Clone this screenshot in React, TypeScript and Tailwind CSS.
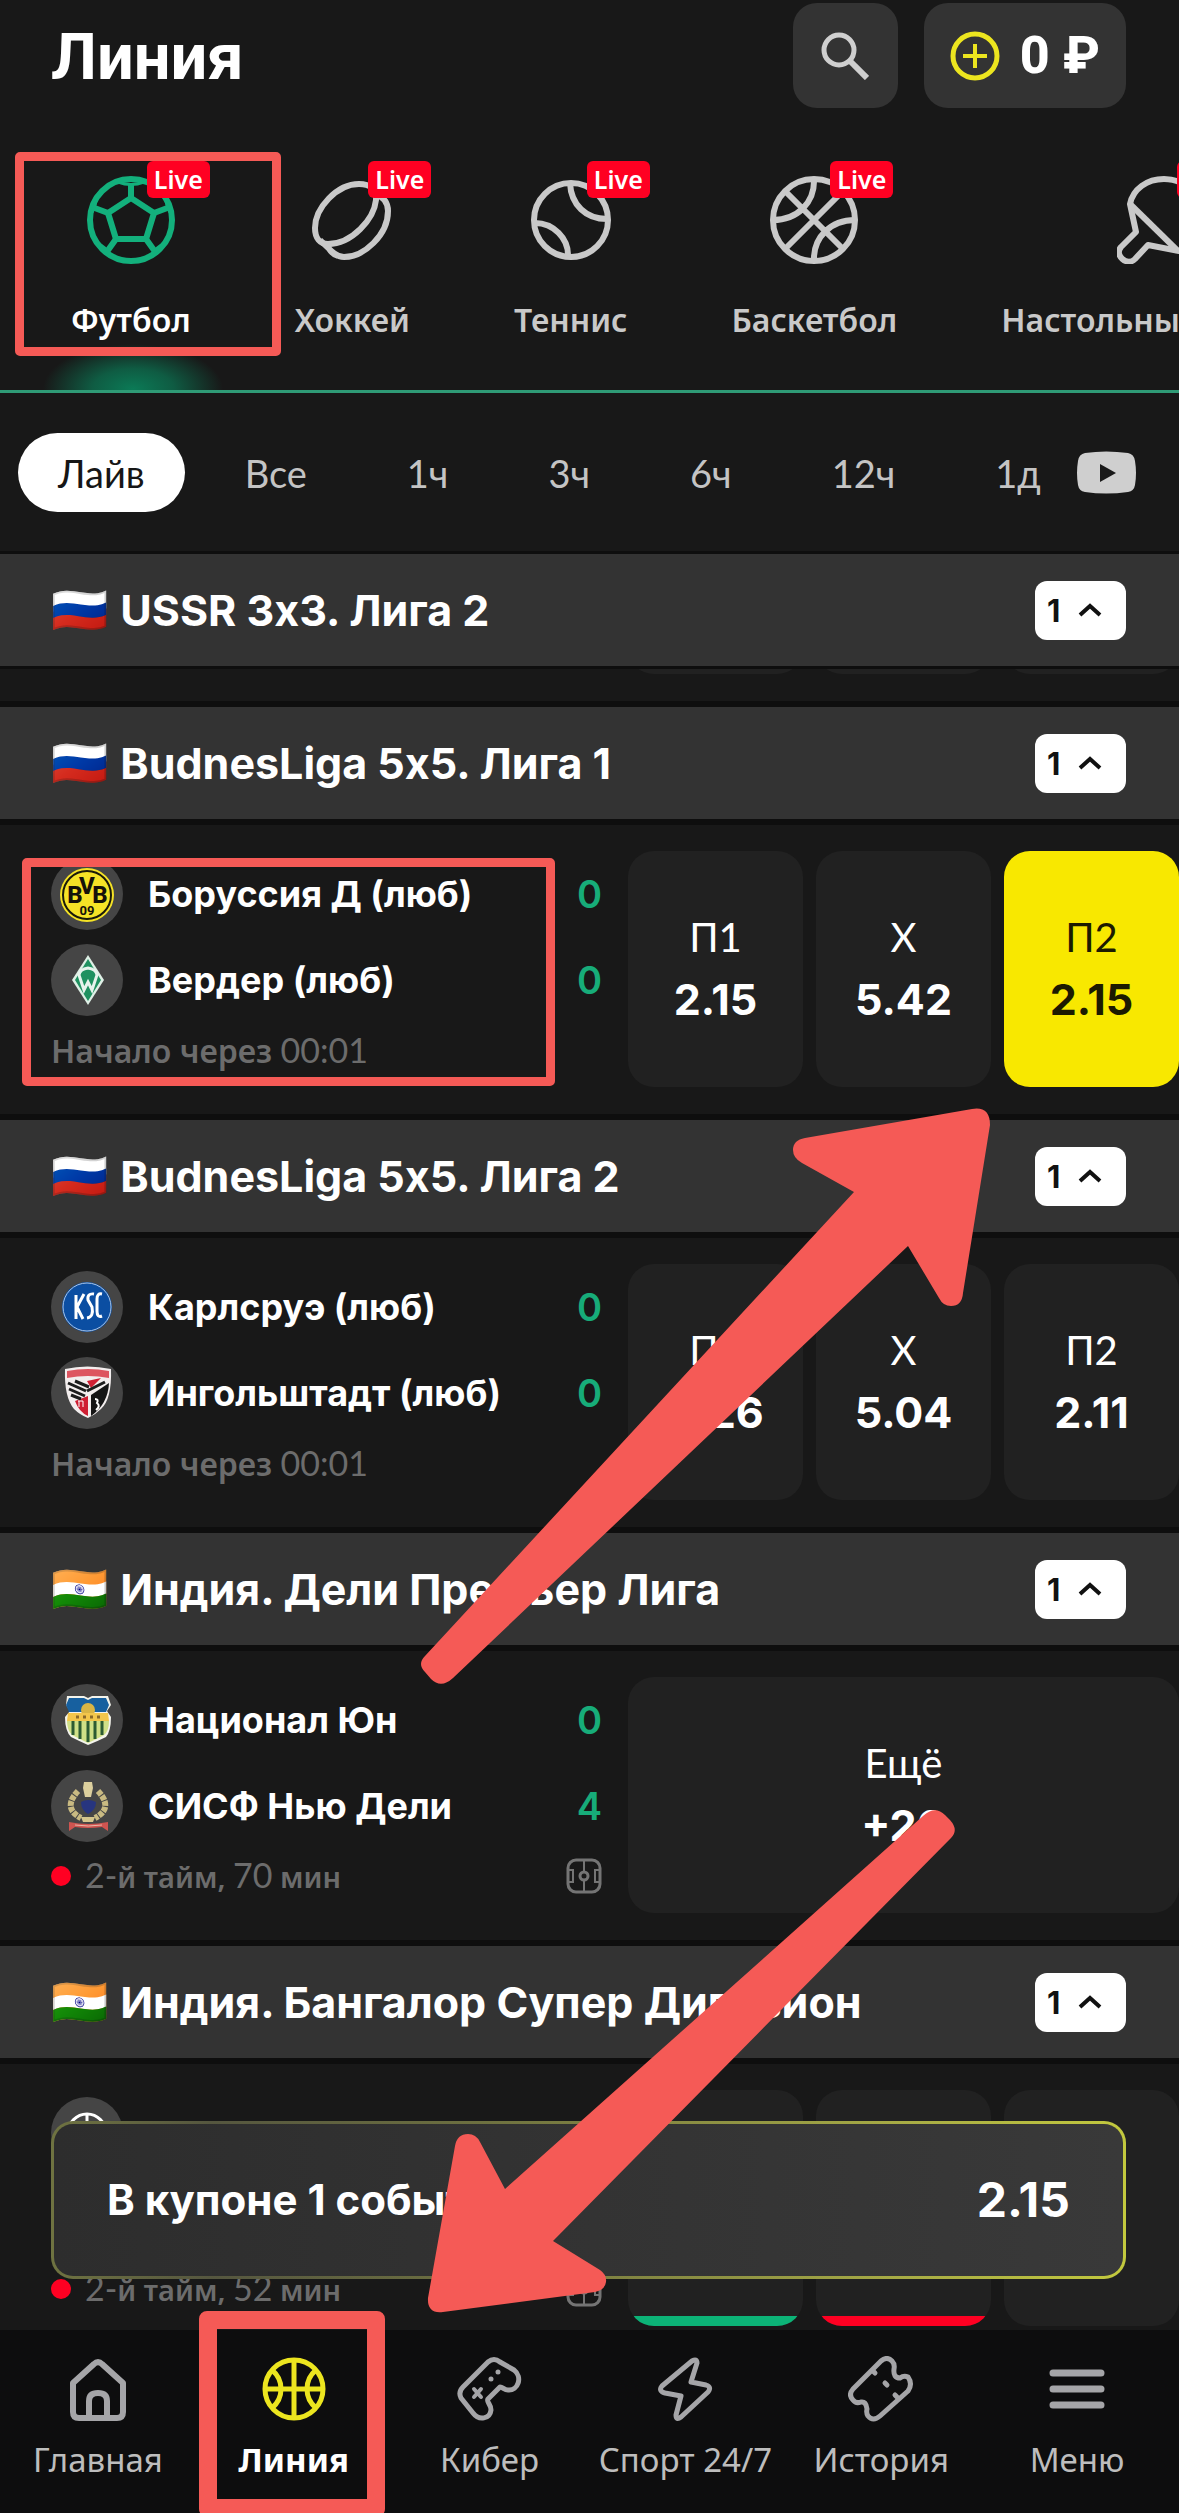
import type { ReactNode } from 'react';

type Outcome = { label: string; value: string; picked?: boolean; trend?: 'up' | 'down' };

type Team = { name: string; score: number; crest: ReactNode };

type Match = {
  teams: Team[];
  live: boolean;
  status: ReactNode;
  outcomes: Outcome[];
};

type League = { flag: string; title: string; match: Match };

/* ---------- sport icons ---------- */

function FootballIcon() {
  return (
    <svg viewBox="0 0 88 88" className="size-[88px]" fill="none" stroke="currentColor" strokeWidth="6" strokeLinejoin="round">
      <circle cx="44" cy="44" r="41" />
      <path d="M44 22 67 37 59 63H29L21 37Z" />
      <path d="M44 22V7M67 37l16-6M59 63l10 14M29 63 19 77M21 37 5 31" />
      <path d="M31 6Q44 11 57 6M79 24q1 9 6 15M77 68q-8 3-13 12M24 80q-5-9-13-12M9 24Q8 33 3 39" strokeWidth="3" />
    </svg>
  );
}

function PuckIcon() {
  return (
    <svg viewBox="0 0 88 88" className="size-[88px]" fill="none" stroke="currentColor" strokeWidth="6" strokeLinejoin="round">
      <path d="M51 8C29 8 7 32 7 52c0 10 5 16 13 16 24 0 46-25 48-44C69 13 62 8 51 8Z" />
      <path d="M67 18c9 3 13 9 13 17 0 24-24 46-44 46-7 0-11-4-24-17M20 68c0 5 4 10 10 12" />
    </svg>
  );
}

function TennisIcon() {
  return (
    <svg viewBox="0 0 88 88" className="size-[88px]" fill="none" stroke="currentColor" strokeWidth="6">
      <circle cx="44" cy="44" r="37" />
      <path d="M43 7c1 22 16 36 37 36M8 47c18 0 34 15 33 34" />
    </svg>
  );
}

function BasketballIcon() {
  return (
    <svg viewBox="0 0 88 88" className="size-[88px]" fill="none" stroke="currentColor" strokeWidth="6">
      <circle cx="44" cy="44" r="41" />
      <path d="m15 15 58 58M73 15 15 73M44 3c1 24-17 41-41 41M44 85c-1-24 17-41 41-41" />
    </svg>
  );
}

function PaddleIcon() {
  return (
    <svg viewBox="0 0 88 88" className="size-[88px]" fill="none" stroke="currentColor" strokeWidth="6" strokeLinejoin="round">
      <path d="M13 28C16 13 30 3 47 3c21 0 38 16 38 37 0 18-10 34-23 35l-31-6-13 14c-8 8-21-4-14-12l15-15Z" />
      <path d="m13 28 48 47" />
    </svg>
  );
}

/* ---------- bottom bar icons ---------- */

function HomeIcon() {
  return (
    <svg viewBox="0 0 66 66" className="size-[66px]" fill="none" stroke="currentColor" strokeWidth="6" strokeLinejoin="round">
      <path d="M8 27 29 8q4-4 8 0l21 19v29q0 6-6 6H14q-6 0-6-6Z" />
      <path d="M24 61V45q0-8 9-8t9 8v16" />
    </svg>
  );
}

function BallIcon() {
  return (
    <svg viewBox="0 0 66 66" className="size-[66px]" fill="none" stroke="currentColor" strokeWidth="5">
      <circle cx="33" cy="33" r="29" />
      <path d="M33 4v58M4 33h58M11 14c12 10 12 28 0 38M55 14c-12 10-12 28 0 38" />
    </svg>
  );
}

function GamepadIcon() {
  return (
    <svg viewBox="0 0 66 66" className="size-[66px]" fill="none" stroke="currentColor" strokeWidth="5" strokeLinejoin="round" strokeLinecap="round">
      <path d="M31 6q6-5 12 0l14 8c9 7 4 21-6 20-4 0-5-3-8-3L31 43c-2 3 3 5 3 11-1 9-12 11-18 3L4 42q-3-6 2-11Z" />
      <path d="m17 33 7 8M24 33l-7 8" strokeWidth="4" />
      <path d="M41 16h0M34 23h0" />
    </svg>
  );
}

function BoltIcon() {
  return (
    <svg viewBox="0 0 66 66" className="size-[66px]" fill="none" stroke="currentColor" strokeWidth="5" strokeLinejoin="round">
      <path d="M40 5q5-3 5 2l-6 19 15 3q6 2 2 7L29 61q-5 4-5-2l5-19-16-3q-7-2-3-7Z" />
    </svg>
  );
}

function TicketIcon() {
  return (
    <svg viewBox="0 0 66 66" className="size-[66px]" fill="none" stroke="currentColor" strokeWidth="5" strokeLinejoin="round" strokeLinecap="round">
      <path d="M33 5q6-5 11 0 3 3 2 8-1 9 6 9 4-3 8-1 5 7 0 14L32 60q-7 6-12 0-2-3-1-7-1-8-6-7-5 2-8-2-5-5 0-11Z" />
      <path d="m25 15 2 2M37 27l2 2M47 39l2 2" />
    </svg>
  );
}

function MenuIcon() {
  return (
    <svg viewBox="0 0 66 66" className="size-[66px]" fill="none" stroke="currentColor" strokeWidth="7" strokeLinecap="round">
      <path d="M9 17h48M9 33h48M9 49h48" />
    </svg>
  );
}

/* ---------- small icons ---------- */

function PitchIcon() {
  return (
    <svg viewBox="0 0 36 36" className="size-9 shrink-0 text-[#747474]" fill="none" stroke="currentColor" strokeWidth="3">
      <rect x="2" y="2" width="32" height="32" rx="8" />
      <circle cx="18" cy="18" r="4" />
      <path d="M18 2v12M18 22v12M2 12h5v12H2M34 12h-5v12h5" strokeWidth="2" />
    </svg>
  );
}

function ChevronUp() {
  return (
    <svg viewBox="0 0 24 14" className="h-3.5 w-6" fill="none" stroke="currentColor" strokeWidth="4">
      <path d="m2 12 10-9 10 9" />
    </svg>
  );
}

/* ---------- crests ---------- */

const crestClass = 'size-[72px] shrink-0';

const bvb = (
  <svg viewBox="0 0 72 72" className={crestClass}>
    <circle cx="36" cy="36" r="36" fill="#454545" />
    <circle cx="36" cy="37" r="27" fill="#f5e326" />
    <circle cx="36" cy="37" r="24" fill="none" stroke="#1a1a0a" strokeWidth="2" />
    <g fill="#15120a" fontFamily="Roboto, sans-serif" textAnchor="middle">
      <text x="24" y="45" fontSize="24" fontWeight="800">B</text>
      <text x="36" y="36" fontSize="24" fontWeight="800">V</text>
      <text x="49" y="45" fontSize="24" fontWeight="800">B</text>
      <text x="36" y="57" fontSize="13" fontWeight="700">09</text>
    </g>
  </svg>
);

const werder = (
  <svg viewBox="0 0 72 72" className={crestClass}>
    <circle cx="36" cy="36" r="36" fill="#454545" />
    <path d="M37 11 53 36 37 61 21 36Z" fill="#dff0e6" />
    <path d="M37 15 50 36 37 57 24 36Z" fill="#1f9160" />
    <path d="m28 31 5 15 4-8 4 8 5-15q-1-6-9-7-8 1-9 7Z" fill="none" stroke="#e6f3ec" strokeWidth="3" />
  </svg>
);

const ksc = (
  <svg viewBox="0 0 72 72" className={crestClass}>
    <circle cx="36" cy="36" r="36" fill="#454545" />
    <circle cx="36" cy="36" r="25" fill="#0b4ea2" />
    <circle cx="36" cy="36" r="24" fill="none" stroke="#a9c4e6" strokeWidth="1" />
    <path d="M25 24v24M33 23l-7 13 6 12M43 23q-7-1-6 6l4 7q2 10-5 11M51 23q-5-1-5 5v12q0 7 5 5" fill="none" stroke="#fff" strokeWidth="3" />
  </svg>
);

const ingolstadt = (
  <svg viewBox="0 0 72 72" className={crestClass}>
    <circle cx="36" cy="36" r="36" fill="#454545" />
    <path d="M14 12q22-5 46 0 1 30-10 40-6 6-13 9-8-3-14-9-10-12-9-40Z" fill="#f3eeee" />
    <path d="M16 14q21-4 42 0v7q-21-4-42 0Z" fill="#dd5560" />
    <path d="m36 24 14-3-10 10ZM24 44l13-5v20q-9-4-13-15Z" fill="#cf1f33" />
    <path d="m40 38 18-12q-1 21-18 33Z" fill="#151515" />
    <path d="m17 26 18 8M18 32l16 7M20 38l10 4M36 34l18-9M24 24l14 6" stroke="#1c1c1c" strokeWidth="3" />
    <path d="M44 42q4 0 2 4 4 3-1 7" stroke="#fff" strokeWidth="2" fill="none" />
    <path d="M27 44h5M28 44v6M32 44v6" stroke="#fff" strokeWidth="1" />
  </svg>
);

const national = (
  <svg viewBox="0 0 72 72" className={crestClass}>
    <circle cx="36" cy="36" r="36" fill="#454545" />
    <path d="M16 12h17l4 2 4-2h16l3 9-4 6 4 6q0 14-5 20-8 4-18 8-9-4-17-8-6-6-6-20l5-6-4-6Z" fill="#f4f4ec" />
    <path d="M18 14h15l4 2 4-2h14l3 7-3 7H18l-3-7Z" fill="#17609f" />
    <circle cx="37" cy="26" r="7" fill="#d9b544" />
    <path d="M17 29h40l1 8H16Z" fill="#f3c64b" />
    <path d="M16 37h42q0 10-5 14-7 4-16 8-8-4-16-8-5-5-5-14Z" fill="#cfe087" />
    <path d="M22 37v14M29 37v18M37 37v21M44 37v18M51 37v14" stroke="#2c5b33" strokeWidth="3" />
    <path d="M25 33h24" stroke="#8c6a2a" strokeWidth="3" strokeDasharray="3 4" />
  </svg>
);

const cisf = (
  <svg viewBox="0 0 72 72" className={crestClass}>
    <circle cx="36" cy="36" r="36" fill="#454545" />
    <path d="M33 12h8l1 6-2 9h-6l-2-9Z" fill="#dccf9e" />
    <path d="M27 21q-16 17 3 27M47 21q16 17-3 27" fill="none" stroke="#c9ba82" strokeWidth="6" strokeDasharray="5 1" />
    <path d="M30 32q7-4 15 0 0 8-8 12-7-4-7-12Z" fill="#27357f" />
    <path d="M30 47h14l-2 5H32Z" fill="#d4c58c" />
    <path d="M18 52q19 4 39 0v9l-6-4q-14 2-27 0l-6 4Z" fill="#cf5450" />
    <path d="M24 55q13 2 27 0" stroke="#e9b8a8" strokeWidth="1" fill="none" />
  </svg>
);

const plainCrest = (
  <svg viewBox="0 0 72 72" className={crestClass}>
    <circle cx="36" cy="36" r="36" fill="#454545" />
    <circle cx="36" cy="36" r="19" fill="none" stroke="#fff" strokeWidth="3" />
    <path d="M36 17v9M26 33l10-7 10 7-4 12H30Z" fill="none" stroke="#fff" strokeWidth="3" />
  </svg>
);

/* ---------- data ---------- */

const sports = [
  { name: 'Футбол', icon: <FootballIcon />, active: true },
  { name: 'Хоккей', icon: <PuckIcon /> },
  { name: 'Теннис', icon: <TennisIcon /> },
  { name: 'Баскетбол', icon: <BasketballIcon /> },
  { name: 'Настольный теннис', icon: <PaddleIcon /> },
];

const periods = ['Лайв', 'Все', '1ч', '3ч', '6ч', '12ч', '1д'];

function Num({ children }: { children: ReactNode }) {
  return <span className="font-['Lato'] text-[34px] font-normal">{children}</span>;
}

const startsSoon = (
  <>
    Начало через <Num>00:01</Num>
  </>
);

const leagues: League[] = [
  {
    flag: '🇷🇺',
    title: 'BudnesLiga 5x5. Лига 1',
    match: {
      live: false,
      status: startsSoon,
      teams: [
        { name: 'Боруссия Д (люб)', score: 0, crest: bvb },
        { name: 'Вердер (люб)', score: 0, crest: werder },
      ],
      outcomes: [
        { label: 'П1', value: '2.15' },
        { label: 'X', value: '5.42' },
        { label: 'П2', value: '2.15', picked: true },
      ],
    },
  },
  {
    flag: '🇷🇺',
    title: 'BudnesLiga 5x5. Лига 2',
    match: {
      live: false,
      status: startsSoon,
      teams: [
        { name: 'Карлсруэ (люб)', score: 0, crest: ksc },
        { name: 'Ингольштадт (люб)', score: 0, crest: ingolstadt },
      ],
      outcomes: [
        { label: 'П1', value: '2.26' },
        { label: 'X', value: '5.04' },
        { label: 'П2', value: '2.11' },
      ],
    },
  },
  {
    flag: '🇮🇳',
    title: 'Индия. Дели Премьер Лига',
    match: {
      live: true,
      status: (
        <>
          <Num>2-</Num>й тайм, <Num>70</Num> мин
        </>
      ),
      teams: [
        { name: 'Национал Юн', score: 0, crest: national },
        { name: 'СИСФ Нью Дели', score: 4, crest: cisf },
      ],
      outcomes: [{ label: 'Ещё', value: '+20' }],
    },
  },
  {
    flag: '🇮🇳',
    title: 'Индия. Бангалор Супер Дивизион',
    match: {
      live: true,
      status: (
        <>
          <Num>2-</Num>й тайм, <Num>52</Num> мин
        </>
      ),
      teams: [
        { name: '', score: 0, crest: plainCrest },
        { name: '', score: 0, crest: plainCrest },
      ],
      outcomes: [
        { label: '', value: '', trend: 'up' },
        { label: '', value: '', trend: 'down' },
        { label: '', value: '' },
      ],
    },
  },
];

const tabs = [
  { name: 'Главная', icon: <HomeIcon /> },
  { name: 'Линия', icon: <BallIcon />, active: true },
  { name: 'Кибер', icon: <GamepadIcon /> },
  { name: 'Спорт 24/7', icon: <BoltIcon /> },
  { name: 'История', icon: <TicketIcon /> },
  { name: 'Меню', icon: <MenuIcon /> },
];

/* ---------- page parts ---------- */

function TopBar() {
  return (
    <header className="flex items-center gap-[26px] pt-[3px] pr-[53px] pl-[51px]">
      <h1 className="mr-auto pt-1 font-['Roboto'] text-[65px] leading-none font-bold text-white">Линия</h1>
      <button type="button" aria-label="Поиск" className="flex size-[105px] items-center justify-center rounded-3xl bg-[#333] text-[#cfcfcf]">
        <svg viewBox="0 0 48 48" className="size-12" fill="none" stroke="currentColor" strokeWidth="5">
          <circle cx="18" cy="18" r="15" />
          <path d="m29 29 17 17" strokeWidth="6" />
        </svg>
      </button>
      <button type="button" className="flex h-[105px] items-center gap-5 rounded-3xl bg-[#333] px-[26px]">
        <svg viewBox="0 0 50 50" className="size-[50px] text-[#ece51f]" fill="none" stroke="currentColor" strokeWidth="5">
          <circle cx="25" cy="25" r="22" />
          <path d="M25 13v24M13 25h24" strokeWidth="4" />
        </svg>
        <span className="font-['Roboto'] text-[52px] leading-none font-extrabold text-white">0 ₽</span>
      </button>
    </header>
  );
}

function SportTabs() {
  return (
    <nav className="relative flex gap-[104px] overflow-hidden border-b-[3px] border-[#2f9b76] pt-[68px] pb-[50px] pl-[71px]">
      <div className="absolute -bottom-[44px] left-[43px] h-[90px] w-[180px] bg-[radial-gradient(closest-side,#0b7a56,#0f5c43_45%,transparent)]" />
      {sports.map((sport) => (
        <a
          key={sport.name}
          href="#"
          className={`relative flex shrink-0 flex-col items-center gap-9 ${sport.active ? 'text-white' : 'text-[#c9c9c9]'}`}
        >
          <span className={`relative ${sport.active ? 'text-[#13b07c]' : ''}`}>
            {sport.icon}
            <span className="absolute -top-[15px] left-[60px] flex h-[37px] items-center rounded-md bg-[#ff0022] px-[7px] font-['Noto_Sans'] text-[25px] leading-none font-semibold text-white">
              Live
            </span>
          </span>
          <span className="font-['Noto_Sans'] text-[32px] leading-10 font-semibold whitespace-nowrap">{sport.name}</span>
        </a>
      ))}
    </nav>
  );
}

function PeriodBar() {
  return (
    <div className="flex items-center border-b-[3px] border-[#0e0e0e] pt-10 pr-[43px] pb-[39px] pl-[18px]">
      <div className="flex min-w-0 flex-1 gap-5 overflow-hidden">
        {periods.map((period, i) => (
          <button
            key={period}
            type="button"
            className={`h-[79px] shrink-0 rounded-full px-10 pt-0.5 font-['Lato'] text-[38px] ${
              i === 0 ? 'bg-white text-[#161616]' : 'text-[#c4c4c4]'
            }`}
          >
            {period}
          </button>
        ))}
      </div>
      <button type="button" aria-label="Трансляции" className="ml-9 shrink-0">
        <svg viewBox="0 0 59 43" className="h-[43px] w-[59px]">
          <path d="M8 2Q29-1 51 2q6 1 7 8 2 12 0 24-1 6-7 7-22 3-43 0-6-1-7-7-2-12 0-24 1-7 7-8Z" fill="#cfcfcf" />
          <path d="M23 13v18l16-9Z" fill="#191919" />
        </svg>
      </button>
    </div>
  );
}

function LeagueHeader({ flag, title }: { flag: string; title: string }) {
  return (
    <div className="flex h-28 items-center bg-[#333] pr-[53px] pl-[51px]">
      <h2 className="mr-auto flex items-center gap-3 font-['Inter'] text-[43px] leading-none font-bold text-white [font-feature-settings:'calt'_0]">
        <span className="font-['Noto_Color_Emoji'] text-[46px]">{flag}</span>
        {title}
      </h2>
      <button type="button" className="flex h-[59px] w-[91px] items-center justify-between rounded-xl bg-white pr-6 pl-3 text-[#111]">
        <span className="font-['Inter'] text-[31px] leading-none font-bold">1</span>
        <ChevronUp />
      </button>
    </div>
  );
}

function OutcomeButton({ label, value, picked, trend }: Outcome) {
  return (
    <button
      type="button"
      className={`relative flex h-[236px] flex-1 flex-col items-center justify-center overflow-hidden rounded-[26px] pb-0.5 leading-[62px] ${
        picked ? 'bg-[#f8e800] text-[#1c1a00]' : 'bg-[#212121] text-white'
      }`}
    >
      <span className="font-['Lato'] text-[40px]">{label}</span>
      <span className="font-['Inter'] text-[43px] font-bold">{value}</span>
      {trend && (
        <span className={`absolute inset-x-0 bottom-0 h-2.5 ${trend === 'up' ? 'bg-[#0cb377]' : 'bg-[#ff0022]'}`} />
      )}
    </button>
  );
}

function MatchRow({ teams, live, status, outcomes }: Match) {
  return (
    <div className="flex gap-[26px] border-y-[6px] border-[#0e0e0e] pt-[26px] pb-[27px] pl-[51px]">
      <div className="min-w-0 flex-1 pt-[7px]">
        <div className="flex flex-col gap-3.5">
          {teams.map((team, i) => (
            <div key={i} className="flex items-center gap-[25px]">
              {team.crest}
              <span className="mr-auto font-['Inter'] text-[36px] font-bold whitespace-nowrap text-white">{team.name}</span>
              <span className="font-['Inter'] text-[38px] font-semibold text-[#17ac79]">{team.score}</span>
            </div>
          ))}
        </div>
        <div className="mt-3.5 flex h-10 items-center justify-between">
          <p
            className={`flex items-center gap-3.5 font-['Noto_Sans'] leading-10 font-semibold text-[#6c6c6c] ${
              live ? 'text-[29px]' : 'text-[32px]'
            }`}
          >
            {live && <span className="size-5 rounded-full bg-[#ff0022]" />}
            <span className="whitespace-nowrap">{status}</span>
          </p>
          {live && <PitchIcon />}
        </div>
      </div>
      <div className="flex w-[551px] shrink-0 gap-[13px]">
        {outcomes.map((outcome, i) => (
          <OutcomeButton key={i} {...outcome} />
        ))}
      </div>
    </div>
  );
}

// Row that has already scrolled up under its league header, only the card bottoms show
function ScrolledRow() {
  return (
    <div className="border-t-[3px] border-b-[6px] border-[#0e0e0e] pb-[27px]">
      <div className="ml-auto flex h-[5px] w-[551px] items-end gap-[13px] overflow-hidden">
        <div className="h-[236px] flex-1 rounded-[26px] bg-[#212121]" />
        <div className="h-[236px] flex-1 rounded-[26px] bg-[#212121]" />
        <div className="h-[236px] flex-1 rounded-[26px] bg-[#212121]" />
      </div>
    </div>
  );
}

function Coupon() {
  return (
    <button
      type="button"
      className="absolute right-[53px] bottom-[51px] left-[51px] rounded-[22px] bg-[linear-gradient(90deg,#6f7341,#55563f_15%,#6d7040_40%,#a9ad45_80%,#c3c93e)] p-[3px]"
    >
      <span className="flex h-[152px] items-center justify-between rounded-[19px] bg-linear-to-r from-[#2d2d2d] to-[#393939] pr-[53px] pl-[53px] font-['Inter'] leading-none font-bold text-white">
        <span className="text-[42px]">В купоне 1 событие</span>
        <span className="text-[48px]">2.15</span>
      </span>
    </button>
  );
}

function BottomNav() {
  return (
    <nav className="grid shrink-0 grid-cols-6 bg-[#0d0d0e] pt-[26px] pr-1 pb-[33px]">
      {tabs.map((tab) => (
        <a key={tab.name} href="#" className="flex flex-col items-center gap-[18px]">
          <span className={tab.active ? 'text-[#ece51f]' : 'text-[#a5a5a8]'}>{tab.icon}</span>
          <span
            className={`font-['Noto_Sans'] text-[33px] leading-10 whitespace-nowrap ${
              tab.active ? 'font-bold text-white' : 'text-[#bdbdbd]'
            }`}
          >
            {tab.name}
          </span>
        </a>
      ))}
    </nav>
  );
}

// Guide marks drawn over the screen: three frames and two arrows
function Marks() {
  return (
    <div className="pointer-events-none absolute inset-0 overflow-hidden" aria-hidden="true">
      <div className="absolute top-[152px] left-[15px] h-[204px] w-[266px] rounded-[5px] border-[9px] border-[#f55a56]" />
      <div className="absolute top-[858px] left-[22px] h-[228px] w-[533px] rounded-[5px] border-[9px] border-[#f55a56]" />
      <div className="absolute top-[2311px] left-[199px] h-[206px] w-[186px] rounded-lg border-[18px] border-[#f55a56]" />
      <svg viewBox="0 0 600 600" className="absolute top-[1100px] left-[400px] size-[600px] text-[#f55a56]" fill="currentColor">
        <path d="M25 556 454 92 402 63Q393 58 393 50 393 40 405 38L572 9Q590 6 590 25L563 193Q562 206 551 206 543 206 539 198L508 146 53 578Q41 589 31 579L25 572Q17 564 25 556Z" />
      </svg>
      <svg viewBox="0 0 540 520" className="absolute top-[1800px] left-[420px] h-[520px] w-[540px] text-[#f55a56]" fill="currentColor">
        <path d="M503 16Q515 5 525 15L530 20Q539 30 531 38L133 441 180 470Q187 475 186 482 185 490 175 492L23 512Q7 514 8 498L35 346Q37 334 48 334 56 334 60 342L85 389Z" />
      </svg>
    </div>
  );
}

export default function App() {
  return (
    <div className="relative flex h-screen flex-col overflow-hidden bg-[#181818]">
      <main className="relative min-h-0 flex-1 overflow-hidden">
        <TopBar />
        <SportTabs />
        <PeriodBar />
        <section>
          <LeagueHeader flag="🇷🇺" title="USSR 3x3. Лига 2" />
          <ScrolledRow />
        </section>
        {leagues.map((league) => (
          <section key={league.title}>
            <LeagueHeader flag={league.flag} title={league.title} />
            <MatchRow {...league.match} />
          </section>
        ))}
        <Coupon />
      </main>
      <BottomNav />
      <Marks />
    </div>
  );
}
